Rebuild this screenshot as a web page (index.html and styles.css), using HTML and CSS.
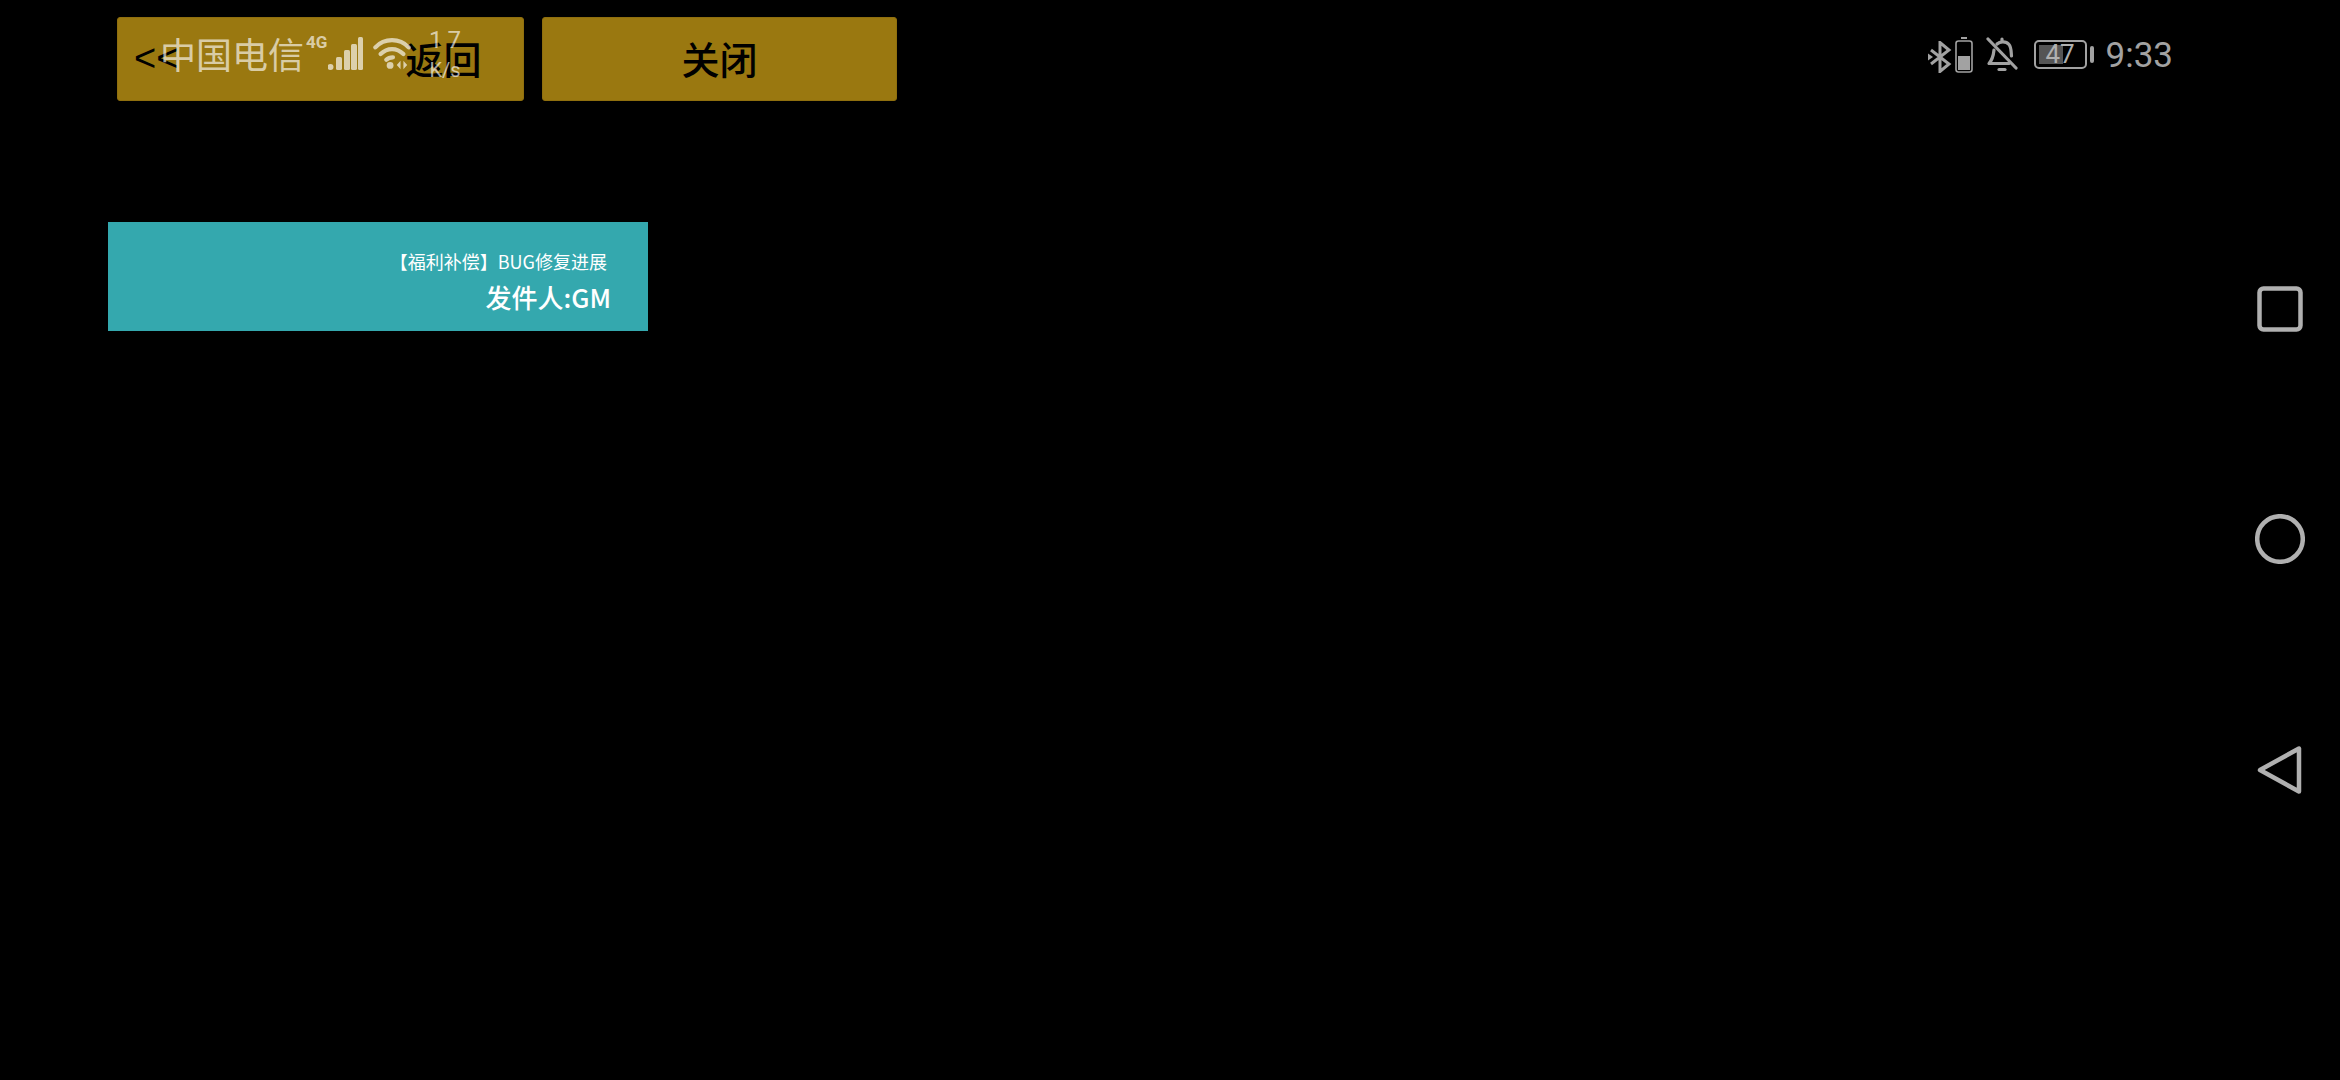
FILE: index.html
```html
<!DOCTYPE html>
<html lang="zh">
<head>
<meta charset="utf-8">
<title>邮件</title>
<link rel="stylesheet" href="styles.css">
</head>
<body>
<main class="page">
  <div class="toolbar">
    <button class="btn btn-back"><span class="chev">&lt;&lt;</span><span>返回</span></button>
    <button class="btn btn-close">关闭</button>
  </div>
  <div class="mail">
    <div class="mail-title">【福利补偿】BUG修复进展</div>
    <div class="mail-from">发件人:GM</div>
  </div>
</main>

<div class="status">
  <div class="status-left">
    <span class="carrier">中国电信</span>
    <span class="net">4G</span>
    <svg class="signal" width="36" height="34" viewBox="0 0 36 34"><g fill="currentColor"><circle cx="2.500" cy="30" r="3"/><rect x="8" y="20" width="6" height="13" rx="1.500"/><rect x="16" y="13" width="6" height="20" rx="1.500"/><rect x="23" y="7" width="6" height="26" rx="1.500"/><rect x="30" y="0" width="5" height="33" rx="1.500"/></g></svg>
    <svg class="wifi" width="38" height="34" viewBox="0 0 40 34"><g fill="none" stroke="currentColor" stroke-width="4.500" stroke-linecap="round"><path d="M2.500 10C12 0 28 0 37.500 10"/><path d="M8 17C15 10 25 10 32 17"/><path d="M14 23C16 21 19 20.500 21 20.500"/></g><circle cx="18" cy="29" r="3.600" fill="currentColor"/><path d="M29 24V33L25 28.500ZM32 24V33L36 28.500Z" fill="currentColor"/></svg>
    <span class="speed"><span class="speed-num">17</span><span>K/s</span></span>
  </div>
  <div class="status-right">
    <svg class="bt" width="24" height="32" viewBox="0 0 24 32"><path d="M3 9L21 23L12 30.500V1.500L21 9L3 23" fill="none" stroke="currentColor" stroke-width="3"/><path d="M0 12.500L5 16L0 19.500Z" fill="currentColor"/></svg>
    <svg class="mini-batt" width="18" height="36" viewBox="0 0 18 36"><rect x="6" y="0" width="6" height="2" fill="currentColor"/><rect x="1" y="4" width="16" height="31" rx="2.500" fill="none" stroke="currentColor" stroke-width="1.600"/><rect x="3" y="19" width="12" height="14" fill="currentColor"/></svg>
    <svg class="bell" width="32" height="36" viewBox="0 0 32 36"><g fill="none" stroke="currentColor" stroke-width="3.200" stroke-linecap="round" stroke-linejoin="round"><path d="M2 2L30 31"/><path d="M11 7C14 4 20 4 23 7.500C25.500 10.500 25 15 25.500 19"/><path d="M8 13C7.500 18 7 22 3 26.500H23"/><path d="M13 32.500H19"/><path d="M16 2V4"/></g></svg>
    <div class="battery"><div class="battery-fill"></div><span class="battery-num">47</span></div>
    <span class="battery-tip"></span>
    <span class="clock">9:33</span>
  </div>
</div>

<nav class="nav">
  <svg width="46" height="46" viewBox="0 0 46 46"><rect x="2.500" y="2.500" width="41" height="41" rx="4" fill="none" stroke="currentColor" stroke-width="4.500"/></svg>
  <svg width="50" height="50" viewBox="0 0 50 50"><circle cx="25" cy="25" r="22.800" fill="none" stroke="currentColor" stroke-width="4.500"/></svg>
  <svg width="46" height="50" viewBox="0 0 46 50"><path d="M42 3.500V46.500L3 25Z" fill="none" stroke="currentColor" stroke-width="4.500" stroke-linejoin="round"/></svg>
</nav>
</body>
</html>
```
FILE: styles.css
```css
* { box-sizing: border-box; }
html, body { margin: 0; height: 100%; }
body {
  background: #000;
  width: 2340px;
  height: 1080px;
  overflow: hidden;
  position: relative;
  font-family: "Noto Sans CJK SC", "Noto Sans", sans-serif;
}
.page { display: flex; flex-direction: column; align-items: flex-start; }
.toolbar { display: flex; gap: 18px; margin: 17px 0 0 117px; }
.btn {
  height: 84px;
  border: 1px solid #8f6f0e;
  border-radius: 3px;
  background: #9a7810;
  color: #000;
  font: 500 38px/1 "Noto Sans CJK SC", sans-serif;
  padding: 0 0 2px;
}
.btn-back {
  width: 407px;
  display: flex;
  align-items: center;
  justify-content: flex-start;
  gap: 227px;
  padding-left: 16px;
}
.chev { font-family: "Liberation Sans", sans-serif; }
.btn-close { width: 355px; }
.mail {
  width: 540px;
  height: 109px;
  margin: 121px 0 0 108px;
  background: #34a8ae;
  color: #fff;
  display: flex;
  flex-direction: column;
  align-items: flex-end;
  padding: 26px 37px 0 0;
}
.mail-title { font-size: 18px; line-height: 26px; margin-right: 4px; }
.mail-from { font-size: 26px; font-weight: 500; line-height: 40px; margin-top: 3px; }

.status {
  position: absolute;
  top: 0;
  left: 0;
  width: 2340px;
  height: 80px;
  display: flex;
  justify-content: space-between;
  pointer-events: none;
}
.status-left {
  display: flex;
  align-items: flex-start;
  margin-left: 160px;
  color: rgba(255, 255, 255, 0.65);
}
.carrier { font-size: 36px; line-height: 40px; margin-top: 33px; }
.net { font: 700 17px/16px "Roboto", sans-serif; margin: 34px 0 0 2px; width: 22px; }
.signal { margin: 37px 0 0 0; }
.wifi { margin: 37px 0 0 9px; }
.speed {
  display: flex;
  flex-direction: column;
  align-items: center;
  font: 20px/30px "Roboto", sans-serif;
  margin: 25px 0 0 18px;
}
.speed-num { font-size: 24px; letter-spacing: 5px; margin-right: -5px; }
.status-right {
  display: flex;
  align-items: flex-start;
  margin-right: 167px;
  color: #a2a2a2;
}
.bt { margin: 41px 0 0 0; }
.mini-batt { margin: 37px 0 0 3px; }
.bell { margin: 37px 0 0 13px; }
.battery {
  position: relative;
  width: 53px;
  height: 29px;
  margin: 40px 0 0 16px;
  border: 2px solid #a2a2a2;
  border-radius: 5px;
  padding: 3px;
  display: flex;
}
.battery-fill { width: 24px; background: #555; }
.battery-num {
  position: absolute;
  inset: 0;
  text-align: center;
  font: 26px/25px "Roboto", sans-serif;
  color: #b0b0b0;
}
.battery-tip { width: 4px; height: 17px; margin: 46px 0 0 3px; background: #a2a2a2; border-radius: 2px; }
.clock { font: 35px/40px "Roboto", sans-serif; margin: 36px 0 0 12px; }

.nav {
  position: absolute;
  top: 286px;
  right: 35px;
  height: 509px;
  width: 50px;
  display: flex;
  flex-direction: column;
  justify-content: space-between;
  align-items: center;
  color: #b0b0b0;
}
```
